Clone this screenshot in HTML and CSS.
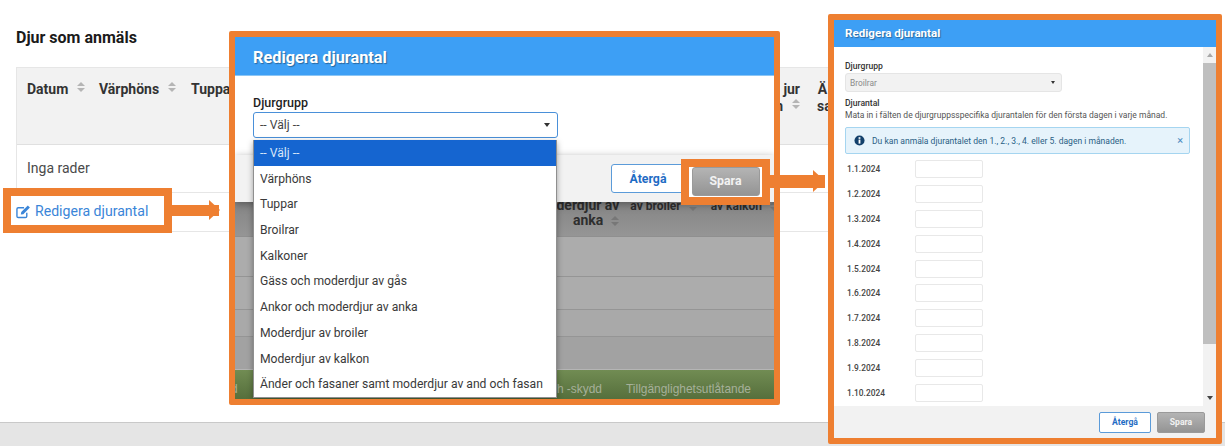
FILE: index.html
```html
<!DOCTYPE html>
<html lang="sv">
<head>
<meta charset="utf-8">
<title>Redigera djurantal</title>
<link rel="stylesheet" href="styles.css">
</head>
<body>
<div class="page">
  <main class="main">
    <h2 class="page-title">Djur som anmäls</h2>
    <div class="table">
      <div class="table-head">
        <div class="th th-date">Datum<i class="sort"></i></div>
        <div class="th th-hen">Värphöns<i class="sort"></i></div>
        <div class="th th-cock">Tuppar<i class="sort"></i></div>
        <div class="th th-turkey">jur<br>n<i class="sort"></i></div>
        <div class="th th-duck">Ä<br>sa</div>
      </div>
      <div class="table-row">Inga rader</div>
      <div class="table-row table-action"></div>
    </div>
  </main>
  <div class="status-bar"></div>
</div>

<a class="callout callout-edit" href="#">
  <svg class="edit-icon" viewBox="0 0 16 16" aria-hidden="true">
    <path d="M11.5 9.2V13a1.4 1.4 0 0 1-1.4 1.4H2.4A1.4 1.4 0 0 1 1 13V5.4A1.4 1.4 0 0 1 2.4 4h6.2" fill="none" stroke="currentColor" stroke-width="1.5"/>
    <path d="M5.6 8.6 12.6 1.6l2.2 2.2-7 7-2.7.5z" fill="currentColor"/>
  </svg>
  Redigera djurantal
</a>
<div class="arrow arrow-edit"></div>

<section class="shot shot-large">
  <header class="dialog-title dialog-title-large">Redigera djurantal</header>
  <div class="dialog-body">
    <label class="field-label">Djurgrupp</label>
    <div class="select select-open">-- Välj --<i class="caret"></i></div>
  </div>
  <div class="dialog-footer">
    <button class="btn btn-back" type="button">Återgå</button>
  </div>
  <div class="backdrop">
    <div class="dim-head">
      <div class="dim-th dim-th-wide">oderdjur av<br>anka<i class="sort sort-dim"></i></div>
      <div class="dim-th">av broiler<i class="sort sort-dim"></i></div>
      <div class="dim-th dim-th-last">av kalkon<i class="sort sort-dim"></i></div>
    </div>
    <div class="dim-row dim-row-1"></div>
    <div class="dim-row dim-row-2"></div>
    <div class="dim-row dim-row-3"></div>
    <div class="dim-row dim-row-4"></div>
    <div class="dim-footer">
      <span class="dim-link-left">d</span>
      <span>h -skydd</span>
      <span>Tillgänglighetsutlåtande</span>
    </div>
  </div>
  <ul class="dropdown">
    <li class="option option-active">-- Välj --</li>
    <li class="option">Värphöns</li>
    <li class="option">Tuppar</li>
    <li class="option">Broilrar</li>
    <li class="option">Kalkoner</li>
    <li class="option">Gäss och moderdjur av gås</li>
    <li class="option">Ankor och moderdjur av anka</li>
    <li class="option">Moderdjur av broiler</li>
    <li class="option">Moderdjur av kalkon</li>
    <li class="option">Änder och fasaner samt moderdjur av and och fasan</li>
  </ul>
</section>

<div class="callout callout-save"><span class="btn btn-save">Spara</span></div>
<div class="arrow arrow-save"></div>

<section class="shot shot-small">
  <header class="dialog-title dialog-title-small">Redigera djurantal</header>
  <div class="small-main">
    <div class="small-content">
      <div class="small-label">Djurgrupp</div>
      <div class="select select-disabled">Broilrar<i class="caret"></i></div>
      <div class="small-label small-label-count">Djurantal</div>
      <p class="small-help">Mata in i fälten de djurgruppsspecifika djurantalen för den första dagen i varje månad.</p>
      <div class="alert">
        <svg class="alert-icon" viewBox="0 0 12 12" aria-hidden="true">
          <circle cx="6" cy="6" r="5.5" fill="#12406b"/>
          <rect x="5" y="5" width="2" height="4.4" fill="#fff"/>
          <rect x="5" y="2.4" width="2" height="1.8" fill="#fff"/>
        </svg>
        <span class="alert-text">Du kan anmäla djurantalet den 1., 2., 3., 4. eller 5. dagen i månaden.</span>
        <span class="alert-close">×</span>
      </div>
      <div class="date-list">
        <div class="date-row"><span class="date-label">1.1.2024</span><span class="date-input"></span></div>
        <div class="date-row"><span class="date-label">1.2.2024</span><span class="date-input"></span></div>
        <div class="date-row"><span class="date-label">1.3.2024</span><span class="date-input"></span></div>
        <div class="date-row"><span class="date-label">1.4.2024</span><span class="date-input"></span></div>
        <div class="date-row"><span class="date-label">1.5.2024</span><span class="date-input"></span></div>
        <div class="date-row"><span class="date-label">1.6.2024</span><span class="date-input"></span></div>
        <div class="date-row"><span class="date-label">1.7.2024</span><span class="date-input"></span></div>
        <div class="date-row"><span class="date-label">1.8.2024</span><span class="date-input"></span></div>
        <div class="date-row"><span class="date-label">1.9.2024</span><span class="date-input"></span></div>
        <div class="date-row"><span class="date-label">1.10.2024</span><span class="date-input"></span></div>
      </div>
    </div>
    <div class="scrollbar">
      <i class="scroll-up"></i>
      <div class="scroll-thumb"></div>
      <i class="scroll-down"></i>
    </div>
  </div>
  <div class="small-footer">
    <span class="btn btn-back btn-small">Återgå</span>
    <span class="btn btn-save btn-small">Spara</span>
  </div>
</section>
</body>
</html>
```

FILE: styles.css
```css
* { box-sizing: border-box; }

html, body {
  margin: 0;
  height: 446px;
  overflow: hidden;
  background: #fff;
  font-family: Roboto, "Liberation Sans", sans-serif;
  color: #333;
}

body { position: relative; width: 1225px; }

/* Base page */
.page { height: 446px; display: flex; flex-direction: column; }
.main { flex: 1; padding: 29px 0 0 16px; }
.page-title { margin: 0 0 20px; font-size: 16px; line-height: 18px; font-weight: 700; color: #1a1a1a; }

.table { width: 812px; overflow: hidden; border-left: 1px solid #e6e6e6; }
.table-head {
  height: 78px;
  display: flex;
  background: #f2f2f2;
  border-top: 1px solid #e6e6e6;
  border-bottom: 1px solid #e0e0e0;
  padding-top: 13px;
  font-size: 14px;
  line-height: 17px;
  font-weight: 700;
  white-space: nowrap;
}
.th-date { margin-left: 10px; width: 72px; }
.th-hen { width: 92px; }
.th-cock { width: 80px; }
.th-turkey { margin-left: auto; text-align: right; }
.th-duck { margin-left: 17px; width: 11px; flex: none; text-align: center; }

.table-row {
  height: 48px;
  padding: 15px 0 0 10px;
  font-size: 14px;
  line-height: 17px;
  color: #4a4a4a;
  border-bottom: 1px solid #e6e6e6;
}
.table-action { height: 39px; }

.status-bar { height: 24px; background: #e5e5e5; border-top: 1px solid #c9c9c9; }

.sort { display: inline-block; position: relative; width: 8px; height: 10px; margin-left: 9px; vertical-align: 2px; }
.sort::before, .sort::after {
  content: "";
  position: absolute;
  left: 0;
  border-left: 4px solid transparent;
  border-right: 4px solid transparent;
}
.sort::before { top: 0; border-bottom: 4px solid #b5b5b5; }
.sort::after { bottom: 0; border-top: 4px solid #b5b5b5; }

/* Annotations */
.callout { position: absolute; display: flex; background: #fff; border: 8px solid #ee7f31; }
.callout-edit {
  left: 3px; top: 188px; width: 169px; height: 45px;
  align-items: center;
  padding: 1px 0 0 5px;
  gap: 4px;
  color: #3a85d8;
  font-size: 14.1px;
  text-decoration: none;
  white-space: nowrap;
}
.edit-icon { width: 15px; height: 15px; flex: none; }

.callout-save {
  left: 681px; top: 159px; width: 89px; height: 46px;
  z-index: 3;
  align-items: center;
  justify-content: center;
  padding-bottom: 2px;
}

.arrow { position: absolute; z-index: 3; background: #ee7f31; height: 11px; }
.arrow::after {
  content: "";
  position: absolute;
  top: -5px;
  right: -1px;
  border-left: 11px solid #ee7f31;
  border-top: 10.5px solid transparent;
  border-bottom: 10.5px solid transparent;
}
.arrow-edit { left: 172px; top: 205px; width: 47px; }
.arrow-save { left: 770px; top: 175px; width: 55px; height: 13px; }
.arrow-save::after { right: 0; border-left-width: 12px; border-top-width: 11.5px; border-bottom-width: 11.5px; }

/* Screenshot panels */
.shot {
  position: absolute;
  display: flex;
  flex-direction: column;
  background: #fff;
  border: 6px solid #ee7f31;
  border-radius: 2px;
  overflow: hidden;
  z-index: 2;
}
.shot-large { left: 229px; top: 31px; width: 551px; height: 374px; }
.shot-small { left: 828px; top: 14px; width: 394px; height: 430px; }

.dialog-title { background: #3d9ff5; color: #fff; font-weight: 700; flex: none; text-shadow: 1px 1px 1px rgba(0, 0, 0, .35); }
.dialog-title-large { height: 39px; padding: 11px 0 0 18px; font-size: 16.3px; line-height: 19px; border-bottom: 1px solid #8cc6f5; }
.dialog-title-small { height: 27px; padding: 6px 0 0 11px; font-size: 11.6px; line-height: 14px; }

.dialog-body { height: 79px; flex: none; padding: 19px 0 0 18px; }
.field-label { display: block; font-size: 12.5px; line-height: 15px; font-weight: 500; color: #1f1f1f; margin-bottom: 2px; }

.select {
  position: relative;
  display: flex;
  align-items: center;
  border-radius: 3px;
}
.select-open {
  width: 305px;
  height: 26px;
  padding-left: 6px;
  font-size: 12.2px;
  color: #444;
  border: 1px solid #4a90d9;
  background: #fff;
}
.caret {
  position: absolute;
  right: 7px;
  top: 50%;
  margin-top: -2px;
  border-left: 3px solid transparent;
  border-right: 3px solid transparent;
  border-top: 4px solid #333;
}

.dialog-footer {
  height: 47px;
  flex: none;
  position: relative;
  z-index: 1;
  background: #f2f2f2;
  padding: 9px 0 0 376px;
  box-shadow: 0 2px 8px rgba(0, 0, 0, .35);
}

.btn {
  display: inline-flex;
  align-items: center;
  justify-content: center;
  font-family: inherit;
  font-weight: 700;
  border-radius: 3px;
}
.btn-back {
  width: 74px;
  height: 29px;
  font-size: 12.3px;
  color: #1f6cc4;
  background: #fff;
  border: 1px solid #5b9bd9;
}
.btn-save {
  width: 68px;
  height: 29px;
  font-size: 12.3px;
  color: #f2f2f2;
  background: linear-gradient(#b4b4b4, #949494);
  border: 1px solid #9a9a9a;
}

/* Dimmed page behind the first dialog */
.backdrop { flex: 1; display: flex; flex-direction: column; overflow: hidden; background: #a9a9a9; }
.dim-head {
  height: 35px;
  flex: none;
  display: flex;
  justify-content: flex-end;
  gap: 14px;
  background: linear-gradient(#858585, #959595);
  border-bottom: 1px solid #8f8f8f;
  font-size: 12px;
  line-height: 15px;
  font-weight: 700;
  color: #2e2e2e;
  text-align: right;
  white-space: nowrap;
}
.dim-th { margin-top: -3px; }
.dim-th-wide { font-size: 14px; margin-top: -4px; margin-right: -3px; }
.dim-th-last { margin-right: -4px; }
.sort-dim { margin-left: 8px; vertical-align: -1px; }
.sort-dim::before { border-bottom-color: #777; }
.sort-dim::after { border-top-color: #777; }
.dim-row { flex: none; border-bottom: 1px solid #959595; }
.dim-row-1 { height: 40px; background: #acacac; }
.dim-row-2 { height: 33px; background: #acacac; }
.dim-row-3 { height: 27px; background: #a9a9a9; }
.dim-row-4 { height: 33px; background: #a2a2a2; border-bottom-color: #b5b5b5; }
.dim-footer {
  flex: 1;
  display: flex;
  align-items: center;
  gap: 24px;
  padding: 8px 23px 0 0;
  background: linear-gradient(#718c53, #566f3c);
  color: #a6b09a;
  font-family: "Liberation Sans", Arial, sans-serif;
  font-size: 11.95px;
}
.dim-link-left { margin-left: -4px; margin-right: auto; }

/* Open dropdown over the first dialog */
.dropdown {
  position: absolute;
  left: 18px;
  top: 103px;
  width: 304px;
  margin: 0;
  padding: 0;
  list-style: none;
  background: #fff;
  border: 1px solid #8f8f8f;
  border-top: 0;
  box-shadow: 0 2px 6px rgba(0, 0, 0, .35);
  font-size: 12.15px;
  color: #3a3a3a;
  z-index: 2;
}
.option { height: 25.7px; padding: 1px 0 0 6px; line-height: 25.7px; white-space: nowrap; }
.option-active { background: #1565d0; color: #d8e6f8; }

/* Second dialog */
.small-main { flex: 1; min-height: 0; display: flex; }
.small-content { flex: 1; padding: 14px 0 0 11px; overflow: hidden; }
.small-label { font-size: 8.6px; line-height: 11px; font-weight: 500; color: #333; }
.small-label-count { margin-top: 6px; }
.select-disabled {
  width: 217px;
  height: 19px;
  margin-top: 1px;
  padding-left: 4px;
  font-size: 8.4px;
  color: #8a8a8a;
  background: #f2f2f2;
  border: 1px solid #e5e5e5;
}
.select-disabled .caret { right: 6px; border-left-width: 2.5px; border-right-width: 2.5px; border-top-width: 3.5px; }
.small-help { margin: 0; font-size: 8.5px; line-height: 12px; color: #555; white-space: nowrap; }
.alert {
  display: flex;
  align-items: center;
  width: 345px;
  height: 27px;
  margin-top: 6px;
  padding-left: 8px;
  background: #e6f3fb;
  border: 1px solid #a5d5f0;
  border-radius: 2px;
}
.alert-icon { width: 11px; height: 11px; flex: none; }
.alert-text { margin-left: 7px; font-size: 8.55px; color: #2a5f85; white-space: nowrap; }
.alert-close { margin-left: auto; margin-right: 6px; font-size: 11px; color: #4a8ac0; }

.date-list { margin-top: 6px; }
.date-row { display: flex; align-items: center; height: 18px; margin-bottom: 6.9px; }
.date-label { width: 70px; padding-left: 2px; font-size: 8.4px; font-weight: 500; color: #444; }
.date-input { width: 68px; height: 18px; background: #fff; border: 1px solid #e8e8e8; border-radius: 2px; }

.scrollbar { width: 13px; flex: none; display: flex; flex-direction: column; align-items: center; background: #f2f2f2; }
.scroll-up, .scroll-down { flex: none; border-left: 3.5px solid transparent; border-right: 3.5px solid transparent; }
.scroll-up { border-bottom: 4px solid #a8a8a8; margin: 6px 0; }
.scroll-down { border-top: 4px solid #444; margin: 6px 0 6px; }
.scroll-thumb { width: 100%; height: 281px; background: #bfbfbf; margin-bottom: auto; }

.small-footer {
  height: 32px;
  flex: none;
  display: flex;
  justify-content: flex-end;
  align-items: center;
  gap: 6px;
  padding: 0 11px 0 0;
  background: #f2f2f2;
}
.btn-small { height: 21px; font-size: 8.6px; border-radius: 2px; }
.btn-small.btn-back { width: 52px; }
.btn-small.btn-save { width: 48px; }
```
